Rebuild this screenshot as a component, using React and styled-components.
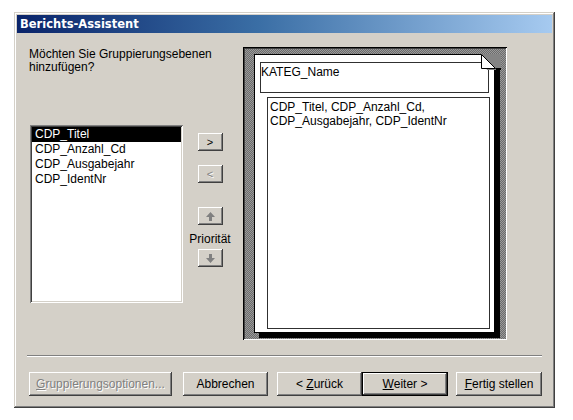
import React from 'react'
import styled, { createGlobalStyle } from 'styled-components'

const GlobalStyle = createGlobalStyle`
  html, body {
    margin: 0;
    padding: 0;
    background: #ffffff;
  }
  body {
    font-family: "Liberation Sans", Arial, sans-serif;
    font-size: 12px;
    color: #000;
  }
`

const face = '#d4d0c8'

const Window = styled.div`
  box-sizing: border-box;
  margin: 12px 0 0 14px;
  width: 541px;
  height: 396px;
  background: ${face};
  box-shadow: inset -1px -1px #404040, inset 1px 1px ${face},
    inset -2px -2px #808080, inset 2px 2px #ffffff;
  display: flex;
  flex-direction: column;
`

const TitleBar = styled.div`
  margin: 3px 3px 0 3px;
  height: 18px;
  padding-left: 3px;
  display: flex;
  align-items: center;
  background: linear-gradient(to right, #0a246a 0%, #3a6ea5 45%, #a6caf0 100%);
  color: #ffffff;
  font-family: "DejaVu Sans", Verdana, sans-serif;
  font-weight: bold;
  font-size: 11.5px;
`

const Content = styled.div`
  display: flex;
  align-items: flex-start;
  height: 307px;
  padding-left: 15px;
`

const LeftColumn = styled.div`
  width: 154px;
  display: flex;
  flex-direction: column;
`

const Prompt = styled.div`
  margin-top: 15px;
  line-height: 13px;
  white-space: nowrap;
`

const ListBox = styled.div`
  box-sizing: border-box;
  margin: 51px 0 0 1px;
  width: 153px;
  height: 178px;
  background: #ffffff;
  box-shadow: inset 1px 1px #808080, inset -1px -1px #ffffff,
    inset 2px 2px #404040, inset -2px -2px ${face};
  padding: 2px;
`

const ListItem = styled.div`
  height: 15px;
  line-height: 15px;
  padding-left: 3px;
  background: ${p => (p.$selected ? '#000000' : 'transparent')};
  color: ${p => (p.$selected ? '#ffffff' : '#000000')};
  white-space: nowrap;
`

const MoverColumn = styled.div`
  width: 40px;
  margin: 100px 0 0 7px;
  display: flex;
  flex-direction: column;
  align-items: center;
`

const SmallButton = styled.button`
  box-sizing: border-box;
  width: 25px;
  height: 18px;
  margin-top: ${p => p.$gap || 0}px;
  padding: 0;
  border: none;
  background: ${face};
  box-shadow: inset -1px -1px #404040, inset 1px 1px #ffffff,
    inset -2px -2px #808080, inset 2px 2px ${face};
  font-family: "Liberation Sans", Arial, sans-serif;
  font-size: 11px;
  color: ${p => (p.disabled ? '#808080' : '#000000')};
  text-shadow: ${p => (p.disabled ? '1px 1px #ffffff' : 'none')};
  display: flex;
  align-items: center;
  justify-content: center;
`

const PriorityLabel = styled.div`
  margin-top: 8px;
  line-height: 13px;
  white-space: nowrap;
`

const Preview = styled.div`
  box-sizing: border-box;
  position: relative;
  margin: 14px 0 0 13px;
  width: 264px;
  height: 293px;
  padding: 7px 0 0 11px;
  background: repeating-conic-gradient(#6c6c6c 0 25%, #9a9a9a 0 50%) 0 0 / 2px 2px;
  box-shadow: inset 1px 1px #000000, inset -1px -1px #ffffff,
    inset 2px 2px #404040;
`

const Page = styled.div`
  box-sizing: border-box;
  position: relative;
  width: 241px;
  height: 279px;
  background: #ffffff;
  border: 1px solid #000000;
  box-shadow: 5px 5px 0 #000000;
`

const Fold = styled.svg`
  position: absolute;
  top: -1px;
  right: -7px;
`

const GroupBox = styled.div`
  box-sizing: border-box;
  margin: 7px 0 0 5px;
  width: 229px;
  height: 31px;
  border: 1px solid #303030;
  padding: 3px 0 0 0;
  line-height: 13px;
`

const DetailBox = styled.div`
  box-sizing: border-box;
  margin: 4px 0 0 12px;
  width: 223px;
  height: 232px;
  border: 1px solid #303030;
  padding: 2px 0 0 2px;
  line-height: 14px;
`

const Divider = styled.div`
  margin: 15px 13px 0 13px;
  height: 1px;
  background: #808080;
  border-bottom: 1px solid #ffffff;
`

const ButtonBar = styled.div`
  display: flex;
  margin-top: 15px;
  padding-left: 15px;
`

const Button = styled.button`
  box-sizing: border-box;
  width: ${p => p.$width}px;
  height: 24px;
  margin-left: ${p => p.$gap || 0}px;
  padding: 0;
  border: ${p => (p.$default ? '1px solid #000000' : 'none')};
  background: ${face};
  box-shadow: inset -1px -1px #404040, inset 1px 1px #ffffff,
    inset -2px -2px #808080, inset 2px 2px ${face};
  font-family: "Liberation Sans", Arial, sans-serif;
  font-size: 12px;
  color: ${p => (p.disabled ? '#808080' : '#000000')};
  text-shadow: ${p => (p.disabled ? '1px 1px #ffffff' : 'none')};
  white-space: nowrap;
`

const Key = styled.span`
  text-decoration: underline;
`

const fields = ['CDP_Titel', 'CDP_Anzahl_Cd', 'CDP_Ausgabejahr', 'CDP_IdentNr']

function ArrowIcon({ down }) {
  return (
    <svg width="9" height="9" viewBox="0 0 9 9">
      <path
        d={down ? 'M3 0h3v4h3L4.5 9 0 4h3z' : 'M4.5 0L9 5H6v4H3V5H0z'}
        fill="#808080"
      />
    </svg>
  )
}

export default function App() {
  return (
    <>
      <GlobalStyle />
      <Window>
        <TitleBar>Berichts-Assistent</TitleBar>
        <Content>
          <LeftColumn>
            <Prompt>
              Möchten Sie Gruppierungsebenen
              <br />
              hinzufügen?
            </Prompt>
            <ListBox>
              {fields.map((f, i) => (
                <ListItem key={f} $selected={i === 0}>{f}</ListItem>
              ))}
            </ListBox>
          </LeftColumn>

          <MoverColumn>
            <SmallButton>&gt;</SmallButton>
            <SmallButton $gap={14} disabled>&lt;</SmallButton>
            <SmallButton $gap={24}><ArrowIcon /></SmallButton>
            <PriorityLabel>Priorität</PriorityLabel>
            <SmallButton $gap={3}><ArrowIcon down /></SmallButton>
          </MoverColumn>

          <Preview>
            <Page>
              <Fold width="20" height="16" viewBox="0 0 20 16">
                <rect x="6" y="0" width="14" height="16" fill="#848484" />
                <polygon points="0,0 6,0 20,14 20,16 6,16" fill="#848484" />
                <polygon points="0.5,0.5 14.5,14.5 0.5,14.5" fill="#ffffff" stroke="#000000" />
                <rect x="15" y="14" width="5" height="2" fill="#000000" />
              </Fold>
              <GroupBox>KATEG_Name</GroupBox>
              <DetailBox>
                CDP_Titel, CDP_Anzahl_Cd,
                <br />
                CDP_Ausgabejahr, CDP_IdentNr
              </DetailBox>
            </Page>
          </Preview>
        </Content>

        <Divider />

        <ButtonBar>
          <Button $width={143} disabled><Key>G</Key>ruppierungsoptionen...</Button>
          <Button $width={85} $gap={11}>Abbrechen</Button>
          <Button $width={85} $gap={9}>&lt; <Key>Z</Key>urück</Button>
          <Button $width={86} $default><Key>W</Key>eiter &gt;</Button>
          <Button $width={86} $gap={8}><Key>F</Key>ertig stellen</Button>
        </ButtonBar>
      </Window>
    </>
  )
}
